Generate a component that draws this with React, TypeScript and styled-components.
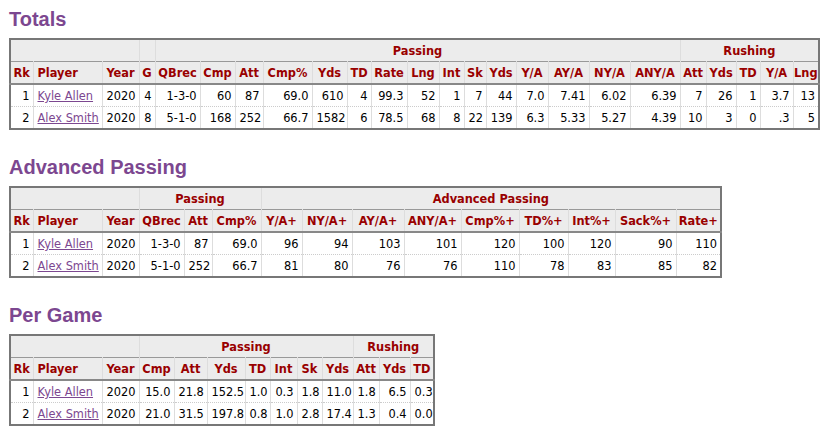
import React from "react";
import styled, { createGlobalStyle } from "styled-components";

const GlobalStyle = createGlobalStyle`
  html, body { margin: 0; padding: 0; background: #fff; }
  body { font-family: "DejaVu Sans", Verdana, sans-serif; color: #000; }
`;

const Page = styled.div`
  padding: 7px 0 0 9px;
`;

const Section = styled.section`
  margin-bottom: 25px;
`;

const Title = styled.h2`
  margin: 0 0 7px;
  font-family: "Liberation Sans", Arial, sans-serif;
  font-size: 20px;
  line-height: 24px;
  font-weight: bold;
  color: #7c4790;
`;

const Table = styled.table<{ $w: number }>`
  table-layout: fixed;
  width: ${(p) => p.$w}px;
  border-collapse: collapse;
  border: 2px solid #777;
  font-size: 11.4px;
  line-height: 14px;
`;

const Col = styled.col<{ $w: number }>`
  width: ${(p) => p.$w}px;
`;

const HeadRow = styled.tr<{ $last?: boolean }>`
  background: #ececec;
  border-bottom: ${(p) => (p.$last ? "2px solid #888" : "1px solid #999")};
`;

const Th = styled.th<{ $align?: "left" | "center" }>`
  padding: ${(p) => (p.$align === "left" ? "4px 1px 3px 4px" : "4px 0 3px")};
  color: #990000;
  font-weight: bold;
  text-align: ${(p) => p.$align ?? "center"};
  white-space: nowrap;
  overflow: visible;
  border-left: 1px solid #ddd;
  border-right: 1px solid #ddd;
`;

const BodyRow = styled.tr`
  & + & td {
    border-top: 1px dotted #ccc;
  }
`;

const Td = styled.td<{ $align?: "left" | "right" }>`
  padding: 4px 3px 3px 4px;
  text-align: ${(p) => p.$align ?? "right"};
  white-space: nowrap;
  overflow: visible;
  border-left: 1px solid #ddd;
  border-right: 1px solid #ddd;
`;

const PlayerLink = styled.a`
  color: #7c4790;
  text-decoration: underline;
`;

type Group = { label: string; span: number };
type StatTable = {
  title: string;
  widths: number[];
  groups: Group[];
  headers: string[];
  rows: string[][];
};

const tables: StatTable[] = [
  {
    title: "Totals",
    widths: [23, 69, 37, 16, 45, 35, 28, 49, 35, 24, 36, 32, 25, 22, 30, 32, 41, 41, 50, 26, 30, 24, 33, 26],
    groups: [
      { label: "", span: 3 },
      { label: "", span: 1 },
      { label: "Passing", span: 15 },
      { label: "Rushing", span: 5 },
    ],
    headers: ["Rk", "Player", "Year", "G", "QBrec", "Cmp", "Att", "Cmp%", "Yds", "TD", "Rate", "Lng", "Int", "Sk", "Yds", "Y/A", "AY/A", "NY/A", "ANY/A", "Att", "Yds", "TD", "Y/A", "Lng"],
    rows: [
      ["1", "Kyle Allen", "2020", "4", "1-3-0", "60", "87", "69.0", "610", "4", "99.3", "52", "1", "7", "44", "7.0", "7.41", "6.02", "6.39", "7", "26", "1", "3.7", "13"],
      ["2", "Alex Smith", "2020", "8", "5-1-0", "168", "252", "66.7", "1582", "6", "78.5", "68", "8", "22", "139", "6.3", "5.33", "5.27", "4.39", "10", "3", "0", ".3", "5"],
    ],
  },
  {
    title: "Advanced Passing",
    widths: [23, 69, 37, 45, 28, 49, 41, 50, 52, 57, 58, 49, 47, 61, 45],
    groups: [
      { label: "", span: 3 },
      { label: "Passing", span: 3 },
      { label: "Advanced Passing", span: 9 },
    ],
    headers: ["Rk", "Player", "Year", "QBrec", "Att", "Cmp%", "Y/A+", "NY/A+", "AY/A+", "ANY/A+", "Cmp%+", "TD%+", "Int%+", "Sack%+", "Rate+"],
    rows: [
      ["1", "Kyle Allen", "2020", "1-3-0", "87", "69.0", "96", "94", "103", "101", "120", "100", "120", "90", "110"],
      ["2", "Alex Smith", "2020", "5-1-0", "252", "66.7", "81", "80", "76", "76", "110", "78", "83", "85", "82"],
    ],
  },
  {
    title: "Per Game",
    widths: [23, 69, 37, 35, 33, 38, 25, 27, 25, 31, 26, 31, 24],
    groups: [
      { label: "", span: 3 },
      { label: "Passing", span: 7 },
      { label: "Rushing", span: 3 },
    ],
    headers: ["Rk", "Player", "Year", "Cmp", "Att", "Yds", "TD", "Int", "Sk", "Yds", "Att", "Yds", "TD"],
    rows: [
      ["1", "Kyle Allen", "2020", "15.0", "21.8", "152.5", "1.0", "0.3", "1.8", "11.0", "1.8", "6.5", "0.3"],
      ["2", "Alex Smith", "2020", "21.0", "31.5", "197.8", "0.8", "1.0", "2.8", "17.4", "1.3", "0.4", "0.0"],
    ],
  },
];

function StatsTable({ t }: { t: StatTable }) {
  const total = t.widths.reduce((a, b) => a + b, 0) + 1;
  return (
    <Section>
      <Title>{t.title}</Title>
      <Table $w={total}>
        <colgroup>
          {t.widths.map((w, i) => (
            <Col key={i} $w={w} />
          ))}
        </colgroup>
        <thead>
          <HeadRow>
            {t.groups.map((g, i) => (
              <Th key={i} colSpan={g.span}>
                {g.label}
              </Th>
            ))}
          </HeadRow>
          <HeadRow $last>
            {t.headers.map((h, i) => (
              <Th key={i} $align={i === 1 ? "left" : "center"}>
                {h}
              </Th>
            ))}
          </HeadRow>
        </thead>
        <tbody>
          {t.rows.map((r, ri) => (
            <BodyRow key={ri}>
              {r.map((c, ci) => (
                <Td key={ci} $align={ci === 1 || ci === 2 ? "left" : "right"}>
                  {ci === 1 ? <PlayerLink href="#">{c}</PlayerLink> : c}
                </Td>
              ))}
            </BodyRow>
          ))}
        </tbody>
      </Table>
    </Section>
  );
}

export default function App() {
  return (
    <>
      <GlobalStyle />
      <Page>
        {tables.map((t) => (
          <StatsTable key={t.title} t={t} />
        ))}
      </Page>
    </>
  );
}
